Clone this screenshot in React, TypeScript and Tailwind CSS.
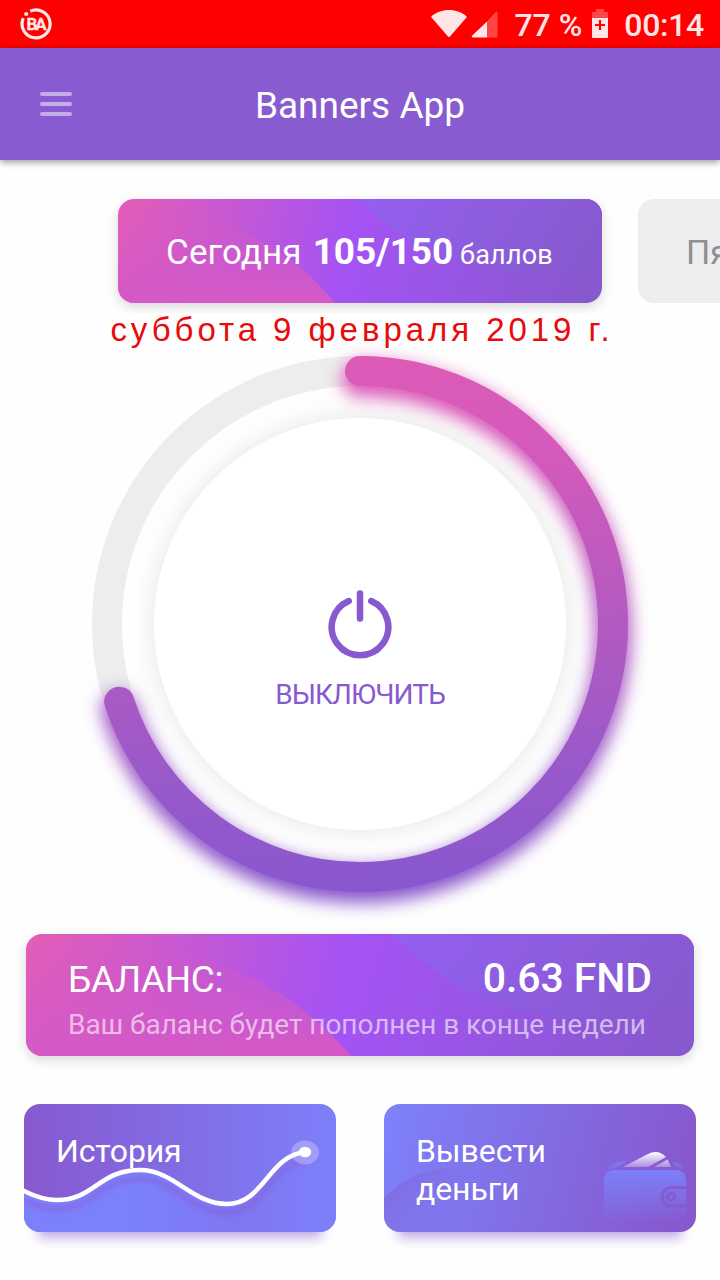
import React from 'react';

const POINTS = 105;
const POINTS_MAX = 150;
const RING_RADIUS = 253;
const RING_LENGTH = 2 * Math.PI * RING_RADIUS;
const WAVE = 'C10 92 20 96 33 96C70 96 75 66 116 66C150 66 168 100 203 100C240 100 244 52 281 48';

const StatusBar = () => (
  <div className="flex h-12 items-center bg-[#ff0000] pl-5 pr-4 text-[#ffe5e5]">
    <svg className="h-8 w-8" viewBox="0 0 32 32" fill="none">
      <path d="M10.2 3.2A14 14 0 1 1 3.3 10.2" stroke="currentColor" strokeWidth="3.2" />
      <circle cx="6.2" cy="6" r="2.1" fill="currentColor" />
      <text x="6.6" y="22" fontSize="17" fontWeight="700" fontFamily="Roboto, sans-serif" letterSpacing="-2.2" fill="currentColor" stroke="currentColor" strokeWidth="0.3">BA</text>
    </svg>
    <svg className="ml-auto h-7 w-9" viewBox="0 0 36 28" fill="currentColor">
      <path d="M.6 6.2C5 2.4 11 0 18 0s13 2.4 17.4 6.2c.5.5.5.9.1 1.4L19 26.4c-.7.7-1.3.7-2 0L.5 7.6C.1 7.1.1 6.7.6 6.2z" />
    </svg>
    <svg className="ml-1 h-[27px] w-[27px]" viewBox="0 0 27 27" fill="currentColor">
      <path d="M16 10.5 24.8 1Q26.5-.4 26.5 2V25.5q0 1-1 1H16z" opacity=".3" />
      <path d="M16 10.5v16H1.8Q0 26 1 24.8z" />
    </svg>
    <span className="ml-4 pt-0.5 text-[32px] font-medium leading-[46px]">77 %</span>
    <svg className="ml-2.5 h-[30px] w-4" viewBox="0 0 16 30" fill="currentColor">
      <path d="M4 0h8v3h3q1 0 1 1v5H0V4q0-1 1-1h3z" opacity=".3" />
      <path d="M0 9h16v19q0 1-1 1H1q-1 0-1-1z" />
      <path d="M8 11v10M3 16h10" stroke="#ff0000" strokeWidth="2.2" />
    </svg>
    <span className="ml-4 pt-0.5 text-[32px] font-medium leading-[46px] tracking-[-0.3px]">00:14</span>
  </div>
);

const Header = () => (
  <header className="relative z-10 grid h-28 grid-cols-[80px_1fr_80px] items-center bg-[#885bd0] shadow-[0_2px_7px_rgba(0,0,0,0.42)]">
    <button aria-label="Menu" className="ml-10 flex w-8 flex-col gap-1.5">
      <span className="h-1 rounded-full bg-[#c3ade7]" />
      <span className="h-1 rounded-full bg-[#c3ade7]" />
      <span className="h-1 rounded-full bg-[#c3ade7]" />
    </button>
    <h1 className="pt-1 text-center text-[37px] leading-[44px] text-white">Banners App</h1>
  </header>
);

interface BackdropProps {
  id: string;
  width: number;
  height: number;
  hill: string;
  cloud: string;
}

// Pink to violet backdrop shared by the points card and the balance card
const CardBackdrop = ({ id, width, height, hill, cloud }: BackdropProps) => (
  <svg className="absolute inset-0 h-full w-full" viewBox={`0 0 ${width} ${height}`}>
    <defs>
      <linearGradient id={`${id}-base`} x1="0" y1="0" x2="1" y2="0.05">
        <stop offset="0" stopColor="#e55db5" />
        <stop offset="0.5" stopColor="#a453f4" />
        <stop offset="1" stopColor="#8858cf" />
      </linearGradient>
      <linearGradient id={`${id}-hill`} x1="0.3" y1="0" x2="0.45" y2="1">
        <stop offset="0" stopColor="#d459c6" stopOpacity="0" />
        <stop offset="1" stopColor="#d459c6" />
      </linearGradient>
      <linearGradient id={`${id}-cloud`} x1="0" y1="0" x2="1" y2="0.2">
        <stop offset="0" stopColor="#9360f0" />
        <stop offset="1" stopColor="#885ad1" />
      </linearGradient>
    </defs>
    <rect width={width} height={height} fill={`url(#${id}-base)`} />
    <path d={hill} fill={`url(#${id}-hill)`} />
    <path d={cloud} fill={`url(#${id}-cloud)`} />
  </svg>
);

const PointsCarousel = () => (
  <div className="flex gap-9 overflow-hidden pb-2.5 pl-[118px] pt-[39px]">
    <div className="relative h-[104px] w-[484px] shrink-0 rounded-2xl shadow-[0_4px_12px_rgba(0,0,0,0.15)]">
      <div className="absolute inset-0 overflow-hidden rounded-2xl">
        <CardBackdrop
          id="points"
          width={484}
          height={104}
          hill="M0 0Q60 5 102 24Q140 37 168 57Q194 76 217 104H0Z"
          cloud="M242 0Q262 22 286 37Q344 73 412 73Q450 73 484 62V0Z"
        />
      </div>
      <div className="relative flex items-baseline whitespace-nowrap pl-12 text-white">
        <span className="text-[35px] leading-[106px] tracking-[0.1px]">Сегодня</span>
        <span className="ml-[11px] text-[37px] font-bold leading-[106px] tracking-[-0.1px]">{POINTS}/{POINTS_MAX}</span>
        <span className="ml-[7px] text-[27px] leading-none tracking-[0.2px]">баллов</span>
      </div>
    </div>
    <div className="h-[104px] w-[484px] shrink-0 rounded-2xl bg-[#ededed] pl-12 text-[34px] leading-[106px] text-[#8e8e93]">
      Пятница
    </div>
  </div>
);

const ProgressRing = () => {
  const arc = (
    <circle
      cx="360"
      cy="292"
      r={RING_RADIUS}
      strokeDasharray={`${(RING_LENGTH * POINTS) / POINTS_MAX} ${RING_LENGTH}`}
      transform="rotate(-90 360 292)"
    />
  );

  return (
    <div className="relative z-10 grid h-[584px] place-items-center">
      <svg className="col-start-1 row-start-1 h-[584px] w-[720px] overflow-visible" viewBox="0 0 720 584" fill="none">
        <defs>
          {/* the arc is rotated by -90deg, so the gradient runs right to left */}
          <linearGradient id="ring" gradientUnits="userSpaceOnUse" x1="628" y1="272" x2="92" y2="292">
            <stop offset="0" stopColor="#de5ab7" />
            <stop offset="0.2" stopColor="#d35abb" />
            <stop offset="0.5" stopColor="#b45ac1" />
            <stop offset="0.8" stopColor="#9759ca" />
            <stop offset="1" stopColor="#8857ce" />
          </linearGradient>
          <filter id="ring-glow" x="-20%" y="-20%" width="140%" height="140%" colorInterpolationFilters="sRGB">
            <feGaussianBlur stdDeviation="8.5" />
          </filter>
          <filter id="dial-glow" x="-20%" y="-20%" width="140%" height="140%">
            <feGaussianBlur stdDeviation="12" />
          </filter>
        </defs>
        <circle cx="360" cy="292" r="206" fill="#000" opacity="0.1" filter="url(#dial-glow)" />
        <circle cx="360" cy="292" r={RING_RADIUS} stroke="#ededed" strokeWidth="30" />
        <g filter="url(#ring-glow)" transform="translate(0 8)" stroke="url(#ring)" strokeWidth="36" strokeLinecap="round">
          {arc}
        </g>
        <g stroke="url(#ring)" strokeWidth="30" strokeLinecap="round">
          {arc}
        </g>
        <circle cx="360" cy="292" r="206" fill="#fff" />
      </svg>
      <button className="col-start-1 row-start-1 flex flex-col items-center pt-14 text-[#8859cf]">
        <svg className="h-[70px] w-[66px]" viewBox="0 0 66 70" fill="none" stroke="currentColor" strokeWidth="6.5" strokeLinecap="round">
          <path d="M33 4.5v25M44.2 12a28.300 28.300 0 1 1-22.400 0" />
        </svg>
        <span className="mt-4 text-[28px] leading-[40px] tracking-[-0.9px]">ВЫКЛЮЧИТЬ</span>
      </button>
    </div>
  );
};

const BalanceCard = () => (
  <section className="relative mx-[26px] mt-[18px] h-[122px] rounded-2xl shadow-[0_4px_12px_rgba(0,0,0,0.15)]">
    <div className="absolute inset-0 overflow-hidden rounded-2xl">
      <CardBackdrop
        id="balance"
        width={668}
        height={122}
        hill="M0 0Q90 0 172 21Q232 43 271 71Q302 95 325 122H0Z"
        cloud="M367 0Q398 32 434 53Q492 84 551 84Q610 84 668 70V0Z"
      />
    </div>
    <div className="relative px-[42px] pt-5 text-white">
      <div className="flex h-12 items-baseline justify-between">
        <span className="text-[37px] leading-[48px] tracking-[-0.4px]">БАЛАНС:</span>
        <span className="text-[41px] font-medium leading-[48px] tracking-[-0.1px]">0.63 FND</span>
      </div>
      <p className="mt-[5px] whitespace-nowrap text-[28px] leading-9 tracking-[-0.05px] text-white/60">
        Ваш баланс будет пополнен в конце недели
      </p>
    </div>
  </section>
);

const HistoryCard = () => (
  <div className="relative h-32 w-[312px] rounded-2xl shadow-[0_20px_12px_-14px_rgba(135,89,207,0.5)]">
    <svg className="absolute inset-0 h-full w-full rounded-2xl" viewBox="0 0 312 128" fill="none">
      <defs>
        <linearGradient id="history" x1="0" y1="0" x2="1" y2="0">
          <stop offset="0" stopColor="#8759cf" />
          <stop offset="1" stopColor="#7d80fa" />
        </linearGradient>
        <linearGradient id="history-fill" x1="0" y1="0" x2="1" y2="0">
          <stop offset="0" stopColor="#7d80fb" />
          <stop offset="0.35" stopColor="#7c80fb" />
          <stop offset="0.7" stopColor="#8076f1" />
          <stop offset="1" stopColor="#7d80fa" />
        </linearGradient>
        <filter id="wave-blur" x="-10%" y="-20%" width="120%" height="150%">
          <feGaussianBlur stdDeviation="2.5" />
        </filter>
      </defs>
      <rect width="312" height="128" fill="url(#history)" />
      <path d={`M0 87${WAVE}L312 44V128H0Z`} fill="url(#history-fill)" />
      <path d={`M0 87${WAVE}`} transform="translate(0 9)" stroke="#8759cf" strokeOpacity="0.5" strokeWidth="5" filter="url(#wave-blur)" />
      <ellipse cx="281" cy="48.5" rx="14" ry="12" fill="#fff" opacity="0.26" />
      <path d={`M-4 85L0 87${WAVE}`} stroke="#fff" strokeWidth="4.6" />
      <ellipse cx="281" cy="48" rx="6.2" ry="5.2" fill="#fff" />
    </svg>
    <span className="relative block pl-8 pt-7 text-[32px] leading-[38px] tracking-[-0.15px] text-white">История</span>
  </div>
);

const WithdrawCard = () => (
  <div className="relative h-32 w-[312px] rounded-2xl shadow-[0_20px_12px_-14px_rgba(135,89,207,0.5)]">
    <svg className="absolute inset-0 h-full w-full rounded-2xl" viewBox="0 0 312 128" fill="none">
      <defs>
        <linearGradient id="withdraw" x1="0" y1="0" x2="1" y2="0.1">
          <stop offset="0" stopColor="#7d82fb" />
          <stop offset="1" stopColor="#8759cf" />
        </linearGradient>
        <linearGradient id="withdraw-hill" gradientUnits="userSpaceOnUse" x1="20" y1="64" x2="90" y2="128">
          <stop offset="0" stopColor="#826ce2" />
          <stop offset="1" stopColor="#7f77f0" stopOpacity="0" />
        </linearGradient>
        <linearGradient id="wallet" gradientUnits="userSpaceOnUse" x1="0" y1="66" x2="0" y2="118">
          <stop offset="0" stopColor="#7b80fa" />
          <stop offset="1" stopColor="#7b80fa" stopOpacity="0" />
        </linearGradient>
        <linearGradient id="note" gradientUnits="userSpaceOnUse" x1="0" y1="48" x2="0" y2="64">
          <stop offset="0" stopColor="#fff" />
          <stop offset="1" stopColor="#fff" stopOpacity="0.25" />
        </linearGradient>
        <linearGradient id="flap" gradientUnits="userSpaceOnUse" x1="0" y1="57" x2="0" y2="66">
          <stop offset="0" stopColor="#7b80fa" />
          <stop offset="1" stopColor="#7b80fa" stopOpacity="0.1" />
        </linearGradient>
      </defs>
      <rect width="312" height="128" fill="url(#withdraw)" />
      <path d="M0 94C24 70 46 64 66 65C92 67 120 80 145 84C175 88 190 100 200 128H0Z" fill="url(#withdraw-hill)" />
      <path d="M223 65Q229 58 236 58L243 57L230 65Z" fill="url(#flap)" />
      <path d="M289 58Q297 58 300 66L292 63Z" fill="url(#flap)" />
      <path d="M239 63L264 50Q274 45 282 53L264 63Z" fill="url(#note)" />
      <path d="M270 63L283.5 55.5L287 63Z" fill="url(#note)" />
      <path d="M231 66H291Q302 66 302 77V118H220V77Q220 66 231 66Z" fill="url(#wallet)" />
      <g stroke="#845bd3" strokeWidth="3">
        <path d="M302 83.5H286.5A9.3 9.3 0 0 0 286.5 102H302" />
        <circle cx="287" cy="92.8" r="3.5" />
      </g>
    </svg>
    <span className="relative block w-48 pl-8 pt-7 text-[32px] leading-[38px] tracking-[-0.1px] text-white">Вывести деньги</span>
  </div>
);

export default function App() {
  return (
    <div className="h-[1280px] w-[720px] overflow-hidden bg-[#fefefe] font-[Roboto,sans-serif]">
      <StatusBar />
      <Header />
      <PointsCarousel />
      <p className="-mb-[17px] -mt-px h-[37px] whitespace-nowrap pl-1 text-center font-['Liberation_Sans',Arial,sans-serif] text-[33px] leading-9 tracking-[3.95px] text-[#e60c0c]">
        суббота 9 февраля 2019 г.
      </p>
      <ProgressRing />
      <BalanceCard />
      <div className="mt-12 flex justify-between px-6">
        <HistoryCard />
        <WithdrawCard />
      </div>
    </div>
  );
}
